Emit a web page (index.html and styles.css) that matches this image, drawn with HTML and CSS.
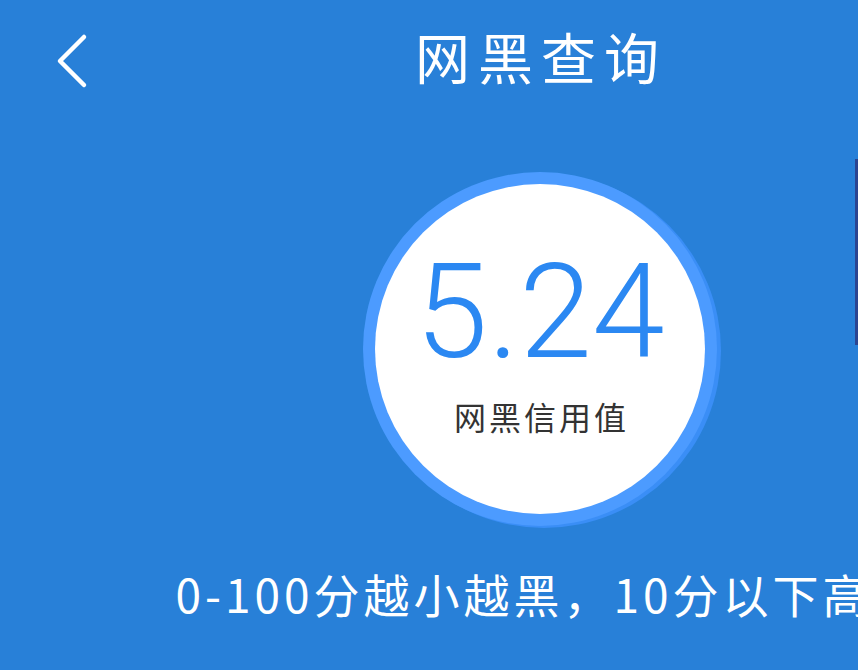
FILE: index.html
```html
<!DOCTYPE html>
<html lang="zh-CN">
<head>
<meta charset="utf-8">
<title>网黑查询</title>
<link rel="stylesheet" href="styles.css">
</head>
<body>
<div class="page">
  <header class="header">
    <a class="back" href="#" aria-label="返回">
      <svg width="40" height="60" viewBox="0 0 40 60">
        <polyline points="28,14 4,38 28,62" transform="translate(0,-8)" fill="none" stroke="#fff" stroke-width="4.5" stroke-linecap="round" stroke-linejoin="round"/>
      </svg>
    </a>
    <h1 class="title">网黑查询</h1>
  </header>
  <section class="score">
    <div class="ring">
      <div class="disc">
        <div class="value">5.24</div>
        <div class="label">网黑信用值</div>
      </div>
    </div>
  </section>
  <p class="hint">0-100分越小越黑，10分以下高危</p>
  <div class="edge"></div>
</div>
</body>
</html>
```
FILE: styles.css
```css
html, body {
  margin: 0;
  padding: 0;
}
body {
  width: 858px;
  height: 670px;
  overflow: hidden;
  background: #2880d8;
  font-family: "Noto Sans CJK SC", "Noto Sans", sans-serif;
  color: #fff;
}
.page {
  position: relative;
  width: 1080px;
  height: 670px;
}
.header {
  position: relative;
  height: 120px;
  box-sizing: border-box;
  padding-bottom: 9px;
  display: flex;
  align-items: center;
  justify-content: center;
}
.back {
  position: absolute;
  left: 56px;
  top: 31px;
  display: block;
  width: 40px;
  height: 60px;
}
.back svg {
  display: block;
}
.title {
  margin: 0;
  font-size: 55px;
  font-weight: 400;
  line-height: 1;
  letter-spacing: 8px;
  padding-left: 2px;
}
.score {
  display: flex;
  justify-content: center;
  margin-top: 52px;
}
.ring {
  width: 354px;
  height: 354px;
  box-sizing: border-box;
  padding: 12px;
  border-radius: 50%;
  background: #4c9bff;
  box-shadow: 4px 2px 0 #3a8ef6;
}
.disc {
  width: 330px;
  height: 330px;
  border-radius: 50%;
  background: #fff;
  display: flex;
  flex-direction: column;
  align-items: center;
  justify-content: center;
}
.value {
  font-family: Roboto, "Liberation Sans", sans-serif;
  font-weight: 300;
  font-size: 131px;
  line-height: 100px;
  color: #2b88f2;
}
.label {
  margin-top: 34px;
  font-size: 32px;
  line-height: 40px;
  letter-spacing: 3px;
  padding-left: 3px;
  color: #333;
}
.hint {
  margin: 39px 0 0;
  text-align: center;
  white-space: nowrap;
  font-size: 46px;
  line-height: 56px;
  letter-spacing: 4px;
  padding-left: 18px;
}
.edge {
  position: absolute;
  left: 855px;
  top: 159px;
  width: 3px;
  height: 186px;
  background: #2b4591;
}
```
